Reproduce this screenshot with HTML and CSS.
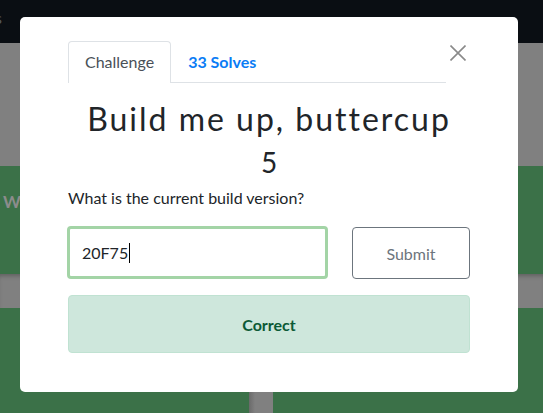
FILE: index.html
```html
<!DOCTYPE html>
<html lang="en">
<head>
<meta charset="utf-8">
<title>Challenge</title>
<link rel="stylesheet" href="styles.css">
</head>
<body>
<div class="page">
  <div class="navbar"><span class="nav-frag">s</span></div>
  <div class="band gray"></div>
  <div class="band green tall"><span class="frag">W</span></div>
  <div class="band gray shadowed"></div>
  <div class="row-cards">
    <div class="card-bg left"></div>
    <div class="card-gap"></div>
    <div class="card-bg right"></div>
  </div>
</div>

<div class="modal">
  <div class="modal-body">
    <div class="tabs-row">
      <ul class="tabs">
        <li class="tab active">Challenge</li>
        <li class="tab solves">33 Solves</li>
      </ul>
      <button class="close" aria-label="Close">
        <svg width="16" height="16" viewBox="0 0 16 16"><path d="M0.5 0.5 L15.5 15.5 M15.5 0.5 L0.5 15.5" stroke="#8a8a8a" stroke-width="1.6" fill="none"/></svg>
      </button>
    </div>
    <h3 class="title">Build me up, buttercup</h3>
    <h4 class="value">5</h4>
    <p class="question">What is the current build version?</p>
    <div class="answer-row">
      <div class="input"><span class="input-text">20F75</span><span class="caret"></span></div>
      <button class="submit">Submit</button>
    </div>
    <div class="alert">Correct</div>
  </div>
</div>
</body>
</html>
```

FILE: styles.css
```css
html, body {
  margin: 0;
  padding: 0;
}
body {
  width: 543px;
  height: 413px;
  overflow: hidden;
  position: relative;
  font-family: Lato, "Open Sans", sans-serif;
  background: #808080;
}
.page {
  display: flex;
  flex-direction: column;
}
.navbar {
  height: 43px;
  background: #0a0e13;
  display: flex;
  align-items: flex-start;
}
.nav-frag {
  margin-left: -5px;
  margin-top: 8px;
  color: #555a60;
  font-size: 16px;
  line-height: 20px;
}
.band {
  height: 123px;
}
.band.gray {
  background: #808080;
}
.band.green {
  background: #3b7148;
}
.band.tall {
  height: 108px;
  display: flex;
  align-items: flex-start;
}
.frag {
  margin-top: 26px;
  margin-left: 3px;
  color: #8c8c8c;
  font-weight: 700;
  font-size: 17px;
  line-height: 20px;
}
.band.shadowed {
  height: 34px;
  box-shadow: inset 0 4px 4px -2px rgba(0, 0, 0, 0.25);
}
.row-cards {
  display: flex;
  height: 105px;
}
.card-bg {
  background: #3b7148;
}
.card-bg.left {
  width: 249px;
}
.card-gap {
  width: 24px;
  background: linear-gradient(to right, #6a6a6a, #808080 6px, #808080);
}
.card-bg.right {
  flex: 1;
}

.modal {
  position: absolute;
  left: 20px;
  top: 17px;
  width: 498px;
  height: 375px;
  background: #fff;
  border-radius: 5px;
  box-sizing: border-box;
}
.modal-body {
  padding: 24px 48px 0 48px;
  display: flex;
  flex-direction: column;
}
.tabs-row {
  display: flex;
  align-items: flex-start;
}
.tabs {
  flex: 1;
  display: flex;
  list-style: none;
  margin: 0;
  padding: 0;
  border-bottom: 1px solid #dee2e6;
}
.tab {
  padding: 8px 16px;
  font-size: 16px;
  line-height: 24px;
  border: 1px solid transparent;
  border-bottom: none;
  border-radius: 4px 4px 0 0;
  margin-bottom: -1px;
  padding-bottom: 9px;
}
.tab.active {
  color: #495057;
  border-color: #dee2e6;
  background: #fff;
}
.tab.solves {
  color: #0a7cf5;
  font-weight: 700;
  padding-left: 16px;
}
.close {
  width: 24px;
  height: 24px;
  margin-top: 0;
  padding: 0;
  border: none;
  background: none;
  display: flex;
  align-items: center;
  justify-content: center;
}
.title {
  margin: 17px 0 0 0;
  text-align: center;
  font-weight: 400;
  font-size: 32px;
  line-height: 38px;
  letter-spacing: 2px;
  color: #212529;
}
.value {
  margin: 7px 0 0 0;
  text-align: center;
  font-weight: 400;
  font-size: 28px;
  line-height: 34px;
  color: #212529;
}
.question {
  margin: 7px 0 0 0;
  font-size: 16px;
  line-height: 24px;
  color: #212529;
}
.answer-row {
  display: flex;
  align-items: flex-start;
  gap: 24px;
  margin-top: 16px;
}
.input {
  width: 261px;
  height: 53px;
  box-sizing: border-box;
  border: 3px solid #a3d4a6;
  border-radius: 4px;
  margin-left: -1px;
  padding: 0 0 0 12px;
  display: flex;
  align-items: center;
  font-size: 16px;
  color: #212529;
}
.caret {
  width: 1px;
  height: 20px;
  background: #000;
  margin-left: 1px;
}
.submit {
  flex: 1;
  height: 52px;
  margin-top: 1px;
  box-sizing: border-box;
  border: 1px solid #6c757d;
  border-radius: 4px;
  background: #fff;
  color: #6c757d;
  font-family: Lato, "Open Sans", sans-serif;
  font-size: 16px;
}
.alert {
  margin-top: 16px;
  height: 58px;
  box-sizing: border-box;
  border: 1px solid #c0e2d2;
  border-radius: 4px;
  background: #cee7dc;
  color: #0c5a36;
  font-weight: 700;
  font-size: 16px;
  display: flex;
  align-items: center;
  justify-content: center;
}
```
